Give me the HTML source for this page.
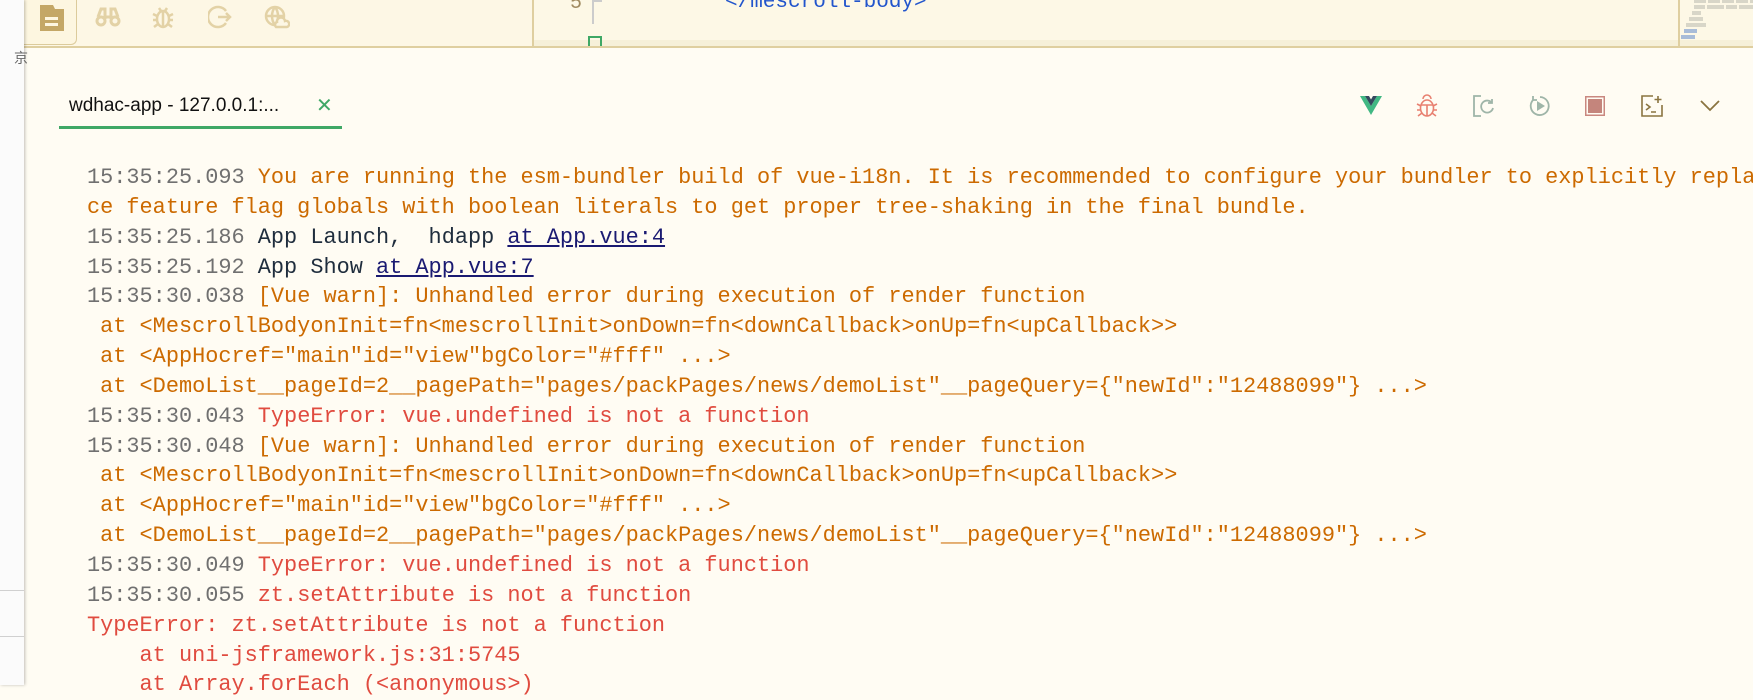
<!DOCTYPE html>
<html><head><meta charset="utf-8"><style>
html,body{margin:0;padding:0;width:1753px;height:685px;overflow:hidden;background:#fffcf3;font-family:"Liberation Sans",sans-serif}
#left{position:absolute;left:0;top:0;width:24px;height:685px;background:#fbfbfb;box-shadow:1px 0 3px rgba(0,0,0,.25);z-index:3}
#top{position:absolute;left:24px;top:0;right:0;height:46px;background:#fdf7e5;border-bottom:2px solid #dfcfa0}
#actbox{position:absolute;left:0;top:0;width:52px;height:44px;border-right:1px solid #dccb9b;border-bottom:1px solid #dccb9b;border-bottom-right-radius:6px;background:#fdf6e0}
#editor{position:absolute;left:532px;top:0;right:0;height:46px;border-left:2px solid #dfcfa0;background:#fdf8e6}
#editor .strip{position:absolute;left:0;right:0;top:40px;height:6px;background:#f6f0d9}
#mini{position:absolute;left:1678px;top:0;width:2px;height:48px;background:#dfcfa0}
.tab{position:absolute;left:69px;top:95px;font-size:19px;color:#111}
.tabx{position:absolute;left:316px;top:93px;font-size:20px;color:#3fa866}
.tabline{position:absolute;left:59px;top:126px;width:283px;height:3px;background:#3fa866}
#log{position:absolute;left:87px;top:163px;font-family:"Liberation Mono",monospace;font-size:21.9px;line-height:29.85px;white-space:pre;color:#1f2d3d}
.t{color:#707070}.o{color:#cc6a00}.r{color:#e04b3f}.l{color:#1a1a72;text-decoration:underline}
.ic{position:absolute;top:96px}
.mb{position:absolute;height:4px;background:#d8d6c8}
</style></head><body>
<div id="left">
<div style="position:absolute;left:0;top:590px;width:24px;height:1px;background:#d0d0d0"></div>
<div style="position:absolute;left:0;top:636px;width:24px;height:1px;background:#d0d0d0"></div>
<div style="position:absolute;left:14px;top:48px;font-size:14px;color:#666">京</div>
</div>
<div id="top">
<div id="actbox"></div>
<svg style="position:absolute;left:15px;top:4px" width="26" height="28" viewBox="0 0 26 28"><path d="M1 1h13l2 4h9v22H1z" fill="#c4a766"/><rect x="6" y="13" width="13" height="3" fill="#fdf6e0"/><rect x="6" y="19" width="13" height="3" fill="#fdf6e0"/></svg>
<svg style="position:absolute;left:71px;top:6px" width="26" height="22" viewBox="0 0 26 22" fill="none" stroke="#e3d2a6" stroke-width="3"><circle cx="6" cy="15" r="4"/><circle cx="20" cy="15" r="4"/><path d="M3 11l3-8h4v10M23 11l-3-8h-4v10M10 11h6"/></svg>
<svg style="position:absolute;left:128px;top:4px" width="22" height="26" viewBox="0 0 22 26" fill="none" stroke="#e3d2a6" stroke-width="2.5"><ellipse cx="11" cy="15" rx="6" ry="8"/><path d="M11 7v16M1 10l4 2M21 10l-4 2M1 16h4M21 16h-4M2 23l4-3M20 23l-4-3M7 4l2 3M15 4l-2 3"/></svg>
<svg style="position:absolute;left:184px;top:5px" width="24" height="24" viewBox="0 0 24 24" fill="none" stroke="#e3d2a6" stroke-width="2.5"><path d="M18 6A10 10 0 1 0 18 18M10 12h12M18 8l4 4-4 4"/></svg>
<svg style="position:absolute;left:240px;top:5px" width="26" height="24" viewBox="0 0 26 24" fill="none" stroke="#e3d2a6" stroke-width="2.5"><circle cx="11" cy="11" r="9"/><path d="M2 11h18M11 2c-4 5-4 13 0 18M11 2c4 5 4 13 0 18"/><path d="M12 22h11a3 3 0 0 0-2-6 4 4 0 0 0-8 1 3 3 0 0 0-1 5z" fill="#fdf7e5"/></svg>
</div>
<div id="editor"><div class="strip"></div>
<div style="position:absolute;left:36px;top:-8px;font-family:'Liberation Mono',monospace;font-size:20px;color:#a08a60">5</div>
<div style="position:absolute;left:58px;top:0;width:8px;height:22px;border-left:2px solid #ccc;border-top:2px solid #ccc"></div>
<div style="position:absolute;left:54px;top:36px;width:10px;height:8px;border:2px solid #3fa866;border-bottom:none"></div>
<div style="position:absolute;left:191px;top:-9px;font-family:'Liberation Mono',monospace;font-size:21px;color:#2255cc">&lt;/mescroll-body&gt;</div>
</div>
<div id="mini"></div>
<div style="position:absolute;left:1694px;top:0;width:59px;height:3px;background:repeating-linear-gradient(90deg,#d8d6c8 0 12px,transparent 12px 14px)"></div>
<div style="position:absolute;left:1694px;top:5px;width:59px;height:4px;background:repeating-linear-gradient(90deg,#d8d6c8 0 11px,transparent 11px 13px,#d8d6c8 13px 30px,transparent 30px 32px)"></div>
<div class="mb" style="left:1692px;top:11px;width:9px"></div>
<div class="mb" style="left:1689px;top:17px;width:14px"></div>
<div class="mb" style="left:1686px;top:23px;width:20px"></div>
<div class="mb" style="left:1684px;top:29px;width:13px;background:#a8bcd8"></div>
<div class="mb" style="left:1681px;top:35px;width:14px;background:#a8bcd8"></div>

<div class="tab">wdhac-app - 127.0.0.1:...</div>
<div class="tabx">✕</div>
<div class="tabline"></div>

<svg class="ic" style="left:1360px" width="22" height="20" viewBox="0 0 22 20"><path d="M0 0h5l6 10 6-10h5L11 19z" fill="#41b883"/><path d="M5 0h4l2 3.5L13 0h4l-6 10z" fill="#34495e"/></svg>
<svg class="ic" style="left:1416px;top:94px" width="22" height="24" viewBox="0 0 22 24" fill="none" stroke="#e88070" stroke-width="1.6"><ellipse cx="11" cy="14" rx="6.5" ry="8"/><path d="M5 11h12M11 11v11M7 5a4 4 0 0 1 8 0M1 10l4 2M21 10l-4 2M1 16h4M21 16h-4M2 22l4-3M20 22l-4-3"/></svg>
<svg class="ic" style="left:1472px;top:95px" width="24" height="22" viewBox="0 0 24 22" fill="none" stroke="#9fb5a8" stroke-width="1.8"><path d="M9 1H2v20h7"/><path d="M20 8a6 6 0 1 0 1 5M20 4v4h-4"/></svg>
<svg class="ic" style="left:1529px;top:95px" width="22" height="22" viewBox="0 0 22 22" fill="none" stroke="#9fb5a8" stroke-width="1.8"><path d="M4 5a9 9 0 1 0 7-3"/><path d="M4 1v4h4"/><path d="M8 6v10l8-5z" fill="#9fb5a8" stroke="none"/></svg>
<svg class="ic" style="left:1585px;top:96px" width="20" height="20" viewBox="0 0 20 20"><rect x="0.75" y="0.75" width="18.5" height="18.5" fill="none" stroke="#c98880" stroke-width="1.5"/><rect x="3" y="3" width="14" height="14" fill="#c4857c"/></svg>
<svg class="ic" style="left:1641px;top:95px" width="22" height="22" viewBox="0 0 22 22" fill="none" stroke="#8a7440" stroke-width="1.6"><path d="M12 1H1v20h20V10"/><path d="M5 9l4 3-4 3M10 17h5M17 1v7M13.5 4.5h7"/></svg>
<svg class="ic" style="left:1700px;top:100px" width="20" height="12" viewBox="0 0 20 12" fill="none" stroke="#8a7440" stroke-width="1.8"><path d="M1 1l9 9 9-9"/></svg>

<div id="log"><span class="t">15:35:25.093 </span><span class="o">You are running the esm-bundler build of vue-i18n. It is recommended to configure your bundler to explicitly repla</span>
<span class="o">ce feature flag globals with boolean literals to get proper tree-shaking in the final bundle.</span>
<span class="t">15:35:25.186 </span>App Launch,  hdapp <span class="l">at App.vue:4</span>
<span class="t">15:35:25.192 </span>App Show <span class="l">at App.vue:7</span>
<span class="t">15:35:30.038 </span><span class="o">[Vue warn]: Unhandled error during execution of render function</span>
<span class="o"> at &lt;MescrollBodyonInit=fn&lt;mescrollInit&gt;onDown=fn&lt;downCallback&gt;onUp=fn&lt;upCallback&gt;&gt;</span>
<span class="o"> at &lt;AppHocref="main"id="view"bgColor="#fff" ...&gt;</span>
<span class="o"> at &lt;DemoList__pageId=2__pagePath="pages/packPages/news/demoList"__pageQuery={"newId":"12488099"} ...&gt;</span>
<span class="t">15:35:30.043 </span><span class="r">TypeError: vue.undefined is not a function</span>
<span class="t">15:35:30.048 </span><span class="o">[Vue warn]: Unhandled error during execution of render function</span>
<span class="o"> at &lt;MescrollBodyonInit=fn&lt;mescrollInit&gt;onDown=fn&lt;downCallback&gt;onUp=fn&lt;upCallback&gt;&gt;</span>
<span class="o"> at &lt;AppHocref="main"id="view"bgColor="#fff" ...&gt;</span>
<span class="o"> at &lt;DemoList__pageId=2__pagePath="pages/packPages/news/demoList"__pageQuery={"newId":"12488099"} ...&gt;</span>
<span class="t">15:35:30.049 </span><span class="r">TypeError: vue.undefined is not a function</span>
<span class="t">15:35:30.055 </span><span class="r">zt.setAttribute is not a function</span>
<span class="r">TypeError: zt.setAttribute is not a function</span>
<span class="r">    at uni-jsframework.js:31:5745</span>
<span class="r">    at Array.forEach (&lt;anonymous&gt;)</span></div>
</body></html>
